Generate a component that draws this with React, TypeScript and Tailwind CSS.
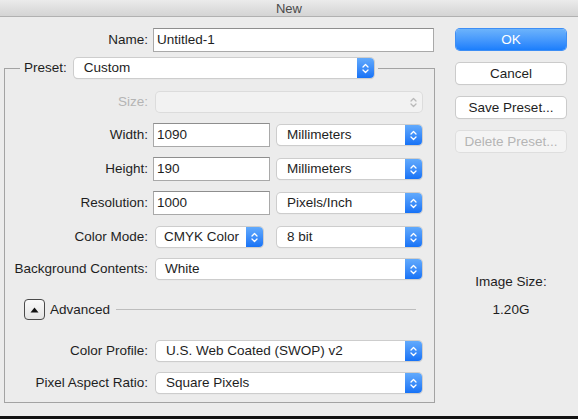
import React from "react";

const font = "font-['Helvetica_Neue','Liberation_Sans',Arial,sans-serif]";

function Arrows({ color = "white" }: { color?: string }) {
  return (
    <svg width="7" height="11" viewBox="0 0 7 11" fill="none">
      <path d="M1 4 L3.5 1.5 L6 4" stroke={color} strokeWidth="1.3" strokeLinecap="round" strokeLinejoin="round" />
      <path d="M1 7 L3.5 9.5 L6 7" stroke={color} strokeWidth="1.3" strokeLinecap="round" strokeLinejoin="round" />
    </svg>
  );
}

const Label = ({ children, dim }: { children: React.ReactNode; dim?: boolean }) => (
  <span className={`w-[143px] shrink-0 text-right ${dim ? "text-[#b4b4b4]" : "text-[#1e1e1e]"}`}>{children}</span>
);

const TextField = ({ value, w, ml = "ml-[5px]" }: { value: string; w: string; ml?: string }) => (
  <div
    className={`${w} ${ml} h-[24px] shrink-0 bg-white border border-[#a9a9a9] border-t-[#8e8e8e] flex items-center pl-[3px] text-[#1e1e1e]`}
  >
    {value}
  </div>
);

const Popup = ({
  value,
  w,
  ml = "ml-[8px]",
  pl = "pl-[10px]",
  disabled,
}: {
  value?: string;
  w: string;
  ml?: string;
  pl?: string;
  disabled?: boolean;
}) => (
  <div
    className={`${w} ${ml} h-[20px] shrink-0 flex items-stretch rounded-[4px] ${
      disabled
        ? "bg-[#f2f2f2] shadow-[0_0_0_1px_#dcdcdc]"
        : "bg-white shadow-[0_0_0_1px_#cdcdcd,0_1px_1px_rgba(0,0,0,0.18)]"
    }`}
  >
    <span className={`flex-1 flex items-center ${pl} text-[#1e1e1e] truncate`}>{value}</span>
    {disabled ? (
      <span className="w-[17px] flex items-center justify-center">
        <Arrows color="#b9b9b9" />
      </span>
    ) : (
      <span className="w-[17px] flex items-center justify-center rounded-r-[4px] bg-gradient-to-b from-[#62aafc] to-[#1672f6]">
        <Arrows />
      </span>
    )}
  </div>
);

const Button = ({ children, kind = "normal" }: { children: React.ReactNode; kind?: "primary" | "normal" | "disabled" }) => {
  const cls =
    kind === "primary"
      ? "bg-gradient-to-b from-[#6cb3fb] to-[#1a7efc] text-white shadow-[0_0_0_1px_#3d8ef5]"
      : kind === "disabled"
      ? "bg-[#f4f4f4] text-[#b5b5b5] shadow-[0_0_0_1px_#dedede]"
      : "bg-white text-[#1e1e1e] shadow-[0_0_0_1px_#cbcbcb,0_1px_1px_rgba(0,0,0,0.15)]";
  return (
    <div className={`w-[110px] h-[21px] rounded-[4px] flex items-center justify-center ${cls}`}>{children}</div>
  );
};

export default function App() {
  return (
    <div className={`w-[578px] h-[419px] flex flex-col bg-[#ececec] text-[13.5px] leading-none ${font}`}>
      {/* title bar */}
      <div className="h-[17px] shrink-0 flex items-center justify-center bg-gradient-to-b from-[#ebebeb] to-[#d4d4d4] border-b border-[#b1b1b1] text-[#4a4a4a] text-[13px]">
        New
      </div>

      <div className="flex-1 flex">
        {/* left side */}
        <div className="w-[440px] shrink-0 pl-[4px] flex flex-col">
          <div className="mt-[11px] flex items-center h-[23px]">
            <span className="w-[144px] text-right text-[#1e1e1e]">Name:</span>
            <TextField value="Untitled-1" w="w-[281px]" />
          </div>

          <fieldset className="mt-[6px] w-[431px] border border-[#a3a3a3] flex flex-col pb-[9px]">
            <legend className="ml-[15px] px-[4px] flex items-center h-[22px]">
              <span className="text-[#1e1e1e]">Preset:</span>
              <Popup value="Custom" w="w-[300px]" ml="ml-[7px]" />
            </legend>

            <div className="mt-[13px] flex items-center h-[20px]">
              <Label dim>Size:</Label>
              <Popup w="w-[266px]" disabled />
            </div>

            <div className="mt-[11px] flex items-center h-[24px]">
              <Label>Width:</Label>
              <TextField value="1090" w="w-[117px]" />
              <Popup value="Millimeters" w="w-[145px]" ml="ml-[7px]" />
            </div>

            <div className="mt-[10px] flex items-center h-[24px]">
              <Label>Height:</Label>
              <TextField value="190" w="w-[117px]" />
              <Popup value="Millimeters" w="w-[145px]" ml="ml-[7px]" />
            </div>

            <div className="mt-[10px] flex items-center h-[24px]">
              <Label>Resolution:</Label>
              <TextField value="1000" w="w-[117px]" />
              <Popup value="Pixels/Inch" w="w-[145px]" ml="ml-[7px]" />
            </div>

            <div className="mt-[12px] flex items-center h-[20px]">
              <Label>Color Mode:</Label>
              <Popup value="CMYK Color" w="w-[107px]" pl="pl-[8px]" />
              <Popup value="8 bit" w="w-[145px]" ml="ml-[14px]" />
            </div>

            <div className="mt-[12px] flex items-center h-[20px]">
              <Label>Background Contents:</Label>
              <Popup value="White" w="w-[266px]" pl="pl-[9px]" />
            </div>

            <div className="mt-[20px] flex items-center h-[21px]">
              <div className="ml-[19px] w-[21px] h-[21px] rounded-[4px] border border-[#4a4a4a] bg-gradient-to-b from-[#fafafa] to-[#e4e4e4] flex items-center justify-center">
                <svg width="9" height="6" viewBox="0 0 9 6">
                  <path d="M0.5 5.5 L4.5 0.5 L8.5 5.5 Z" fill="#111" />
                </svg>
              </div>
              <span className="ml-[5px] text-[#1e1e1e]">Advanced</span>
              <div className="ml-[6px] w-[300px] h-px bg-[#bdbdbd]" />
            </div>

            <div className="mt-[21px] flex items-center h-[20px]">
              <Label>Color Profile:</Label>
              <Popup value="U.S. Web Coated (SWOP) v2" w="w-[266px]" />
            </div>

            <div className="mt-[12px] flex items-center h-[20px]">
              <Label>Pixel Aspect Ratio:</Label>
              <Popup value="Square Pixels" w="w-[266px]" />
            </div>
          </fieldset>
        </div>

        {/* right side */}
        <div className="ml-[16px] flex flex-col items-center w-[110px]">
          <div className="mt-[12px] flex flex-col gap-[13px]">
            <Button kind="primary">OK</Button>
            <Button>Cancel</Button>
            <Button>Save Preset...</Button>
            <Button kind="disabled">Delete Preset...</Button>
          </div>
          <div className="mt-[123px] text-[#1e1e1e]">Image Size:</div>
          <div className="mt-[14px] text-[#1e1e1e]">1.20G</div>
        </div>
      </div>

      <div className="h-[3px] shrink-0 bg-[#121212]" />
    </div>
  );
}
